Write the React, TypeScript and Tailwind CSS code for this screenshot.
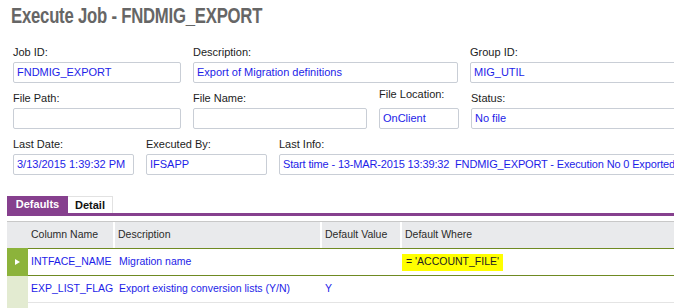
const formRows = [
  [
    { label: 'Job ID:', value: 'FNDMIG_EXPORT', w: 'w-[168px]' },
    { label: 'Description:', value: 'Export of Migration definitions', w: 'w-[265px]' },
    { label: 'Group ID:', value: 'MIG_UTIL', w: 'w-[230px]' },
  ],
  [
    { label: 'File Path:', value: '', w: 'w-[168px]' },
    { label: 'File Name:', value: '', w: 'w-[174px]' },
    { label: 'File Location:', value: 'OnClient', w: 'w-[80px]', raised: true },
    { label: 'Status:', value: 'No file', w: 'w-[230px]' },
  ],
  [
    { label: 'Last Date:', value: '3/13/2015 1:39:32 PM', w: 'w-[121px]' },
    { label: 'Executed By:', value: 'IFSAPP', w: 'w-[121px]' },
    {
      label: 'Last Info:',
      value: 'Start time - 13-MAR-2015 13:39:32\u00a0\u00a0FNDMIG_EXPORT - Execution No 0 Exported',
      w: 'w-[420px]',
      tight: true,
    },
  ],
];

type Field = { label: string; value: string; w: string; raised?: boolean; tight?: boolean };

function FormField({ f }: { f: Field }) {
  return (
    <div className={`flex shrink-0 flex-col ${f.w}`}>
      <div
        className={`h-[14px] whitespace-nowrap leading-[14px] text-[#1c1c1c] ${
          f.raised ? '-mt-[4px] mb-[7px]' : 'mb-[3px]'
        }`}
      >
        {f.label}
      </div>
      <div
        className={`flex h-[21px] items-center overflow-hidden whitespace-nowrap rounded-[2px] border border-[#c9ced6] px-[3px] text-[#1d1de8] ${
          f.tight ? 'tracking-[-0.15px]' : ''
        }`}
      >
        {f.value}
      </div>
    </div>
  );
}

const cols = [
  { name: 'Column Name', w: 'w-[87px]' },
  { name: 'Description', w: 'w-[207px]' },
  { name: 'Default Value', w: 'w-[80px]' },
  { name: 'Default Where', w: 'flex-1' },
];

export default function App() {
  return (
    <div className="h-[308px] w-[674px] overflow-hidden bg-white font-['Liberation_Sans',Arial,sans-serif] text-[11px]">
      <div className="h-[24px] pl-[11px] pt-[4px] box-content">
        <h1 className="inline-block origin-left scale-x-[0.76] whitespace-nowrap font-['Liberation_Sans',Arial,sans-serif] text-[22px] font-bold leading-[24px] tracking-[-0.3px] text-[#666666]">
          Execute Job - FNDMIG_EXPORT
        </h1>
      </div>

      <div className="mt-[17px] flex flex-col gap-[8px] pl-[13px]">
        {formRows.map((row, i) => (
          <div key={i} className="flex gap-[12px]">
            {row.map((f) => (
              <FormField key={f.label} f={f} />
            ))}
          </div>
        ))}
      </div>

      <div className="mt-[21px] pl-[7px]">
        <div className="flex h-[17px] font-bold">
          <div className="flex w-[61px] items-center justify-center bg-[#86408e] text-white">Defaults</div>
          <div className="flex w-[45px] items-center justify-center border-r border-t border-[#e2e2e2] text-[#111]">
            Detail
          </div>
        </div>
        <div className="h-[3px] bg-[#86408e]" />

        <div className="mt-[5px] text-[10.5px]">
          <div className="flex h-[27px] border-t border-[#c8c8c8] bg-[#e9eaec] text-[#2a2a2a]">
            <div className="w-[21px] shrink-0" />
            {cols.map((c, i) => (
              <div
                key={c.name}
                className={`flex items-center whitespace-nowrap pl-[3px] ${c.w} ${i < 3 ? 'border-r-2 border-white' : ''}`}
              >
                {c.name}
              </div>
            ))}
          </div>

          <div className="flex h-[28px]">
            <div className="flex w-[21px] shrink-0 items-center justify-center bg-[#8cb33b]">
              <svg width="7" height="8" viewBox="0 0 7 8">
                <path d="M1 1 L6 4 L1 7 Z" fill="white" />
              </svg>
            </div>
            <div className="flex flex-1 border-y border-[#6f8a22] text-[#1d1de8]">
              <div className="flex w-[87px] items-center pl-[3px]">INTFACE_NAME</div>
              <div className="flex w-[207px] items-center pl-[4px]">Migration name</div>
              <div className="w-[80px]" />
              <div className="flex flex-1 items-center">
                <span className="flex h-[17px] w-[101px] items-center bg-[#ffff00] pl-[4px] text-[#222]">
                  = 'ACCOUNT_FILE'
                </span>
              </div>
            </div>
          </div>

          <div className="flex h-[27px]">
            <div className="w-[21px] shrink-0 bg-[#e3ebd1]" />
            <div className="flex flex-1 border-b border-[#e4e4e4] text-[#1d1de8]">
              <div className="flex w-[87px] items-center whitespace-nowrap pl-[3px]">EXP_LIST_FLAG</div>
              <div className="flex w-[207px] items-center whitespace-nowrap pl-[4px]">
                Export existing conversion lists (Y/N)
              </div>
              <div className="flex w-[80px] items-center pl-[3px]">Y</div>
              <div className="flex-1" />
            </div>
          </div>

          <div className="flex h-[10px]">
            <div className="w-[21px] shrink-0 bg-[#e3ebd1]" />
          </div>
        </div>
      </div>
    </div>
  );
}
